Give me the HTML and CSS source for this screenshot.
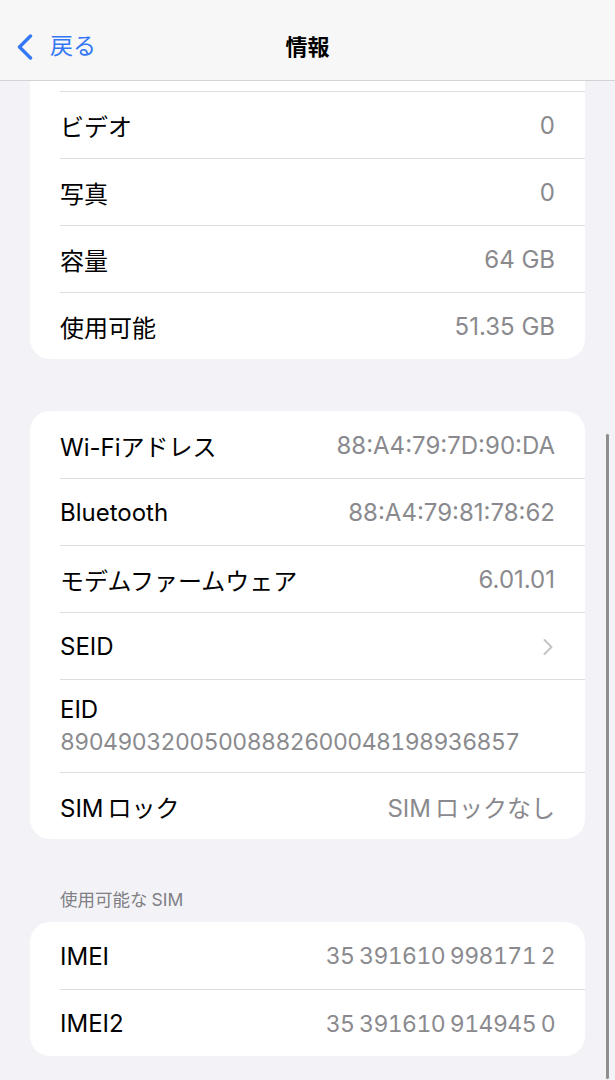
FILE: index.html
```html
<!DOCTYPE html>
<html lang="ja">
<head>
  <meta charset="utf-8">
  <title>情報</title>
  <link rel="stylesheet" href="styles.css">
</head>
<body>
  <header class="navbar">
    <a class="back" href="#">
      <svg class="back-icon" width="16" height="26" viewBox="0 0 16 26">
        <path d="M13.5 2 L2.5 13 L13.5 24" fill="none" stroke="#3478f6" stroke-width="3.4" stroke-linecap="round" stroke-linejoin="round"/>
      </svg>
      <span>戻る</span>
    </a>
    <h1 class="title">情報</h1>
  </header>

  <main class="content">
    <section class="card card-cut">
      <div class="stub"></div>
      <div class="row"><span class="label">ビデオ</span><span class="value">0</span></div>
      <div class="row"><span class="label">写真</span><span class="value">0</span></div>
      <div class="row"><span class="label">容量</span><span class="value">64 GB</span></div>
      <div class="row"><span class="label">使用可能</span><span class="value">51.35 GB</span></div>
    </section>

    <section class="card gap-top">
      <div class="row"><span class="label">Wi-Fiアドレス</span><span class="value">88:A4:79:7D:90:DA</span></div>
      <div class="row"><span class="label">Bluetooth</span><span class="value">88:A4:79:81:78:62</span></div>
      <div class="row"><span class="label">モデムファームウェア</span><span class="value">6.01.01</span></div>
      <div class="row">
        <span class="label">SEID</span>
        <svg class="chevron" width="12" height="20" viewBox="0 0 12 20">
          <path d="M2.5 3 L9.5 10 L2.5 17" fill="none" stroke="#c4c4c7" stroke-width="2" stroke-linecap="round" stroke-linejoin="round"/>
        </svg>
      </div>
      <div class="row row-stack">
        <span class="label">EID</span>
        <span class="value num">89049032005008882600048198936857</span>
      </div>
      <div class="row"><span class="label"><span class="latin">SIM</span>ロック</span><span class="value"><span class="latin">SIM</span>ロックなし</span></div>
    </section>

    <h2 class="section-title">使用可能な<span class="latin-small">SIM</span></h2>
    <section class="card">
      <div class="row"><span class="label">IMEI</span><span class="value num">35 391610 998171 2</span></div>
      <div class="row"><span class="label">IMEI2</span><span class="value num">35 391610 914945 0</span></div>
    </section>
  </main>

  <div class="scrollbar"></div>
</body>
</html>
```

FILE: styles.css
```css
body {
  margin: 0;
  padding: 0;
  width: 615px;
  height: 1080px;
  overflow: hidden;
  position: relative;
  background-color: #f2f2f7;
  font-family: Inter, "Noto Sans CJK JP", sans-serif;
  color: #000;
}

.navbar {
  box-sizing: border-box;
  height: 81px;
  background-color: #f7f7f7;
  border-bottom: 1px solid #d3d3d6;
  display: flex;
  align-items: center;
  justify-content: center;
  position: relative;
}

.back {
  position: absolute;
  left: 17px;
  top: 31px;
  display: flex;
  align-items: center;
  gap: 17px;
  color: #3478f6;
  text-decoration: none;
  font-size: 23px;
  line-height: 30px;
}

.back-icon {
  display: block;
  margin-top: 2px;
}

.title {
  margin: 0;
  margin-top: 10px;
  font-size: 22px;
  font-weight: 700;
}

.content {
  padding: 0 30px;
}

.card {
  background-color: #fff;
  border-radius: 20px;
  overflow: hidden;
}

.card-cut {
  border-top-left-radius: 0;
  border-top-right-radius: 0;
}

.stub {
  height: 10px;
}

.gap-top {
  margin-top: 52px;
}

.row {
  box-sizing: border-box;
  height: 67px;
  margin-left: 30px;
  padding-right: 30px;
  padding-top: 1px;
  border-top: 1px solid #dedee0;
  display: flex;
  align-items: center;
  justify-content: space-between;
  font-size: 24px;
}

.card > .row:first-child {
  border-top: none;
}

.label {
  white-space: nowrap;
}

.value {
  color: #8a8a8e;
  white-space: nowrap;
}

/* long numbers use fixed-width digits */
.num {
  font-size: 23px;
  font-variant-numeric: tabular-nums;
  letter-spacing: -0.55px;
  word-spacing: -1px;
}

.latin {
  margin-right: 4px;
}

.latin-small {
  margin-left: 4px;
}

.chevron {
  display: block;
  margin-right: 1px;
}

.row-stack {
  height: 93px;
  flex-direction: column;
  align-items: flex-start;
  justify-content: flex-start;
  padding-top: 13px;
}

.row-stack .label,
.row-stack .value {
  line-height: 33px;
}

.section-title {
  margin: 50px 0 11px 30px;
  font-size: 17.5px;
  line-height: 22px;
  font-weight: 400;
  color: #7f7f84;
}

.scrollbar {
  position: absolute;
  right: 5px;
  top: 433px;
  bottom: 0;
  width: 3px;
  background-color: #8e8e8e;
  border: 1px solid #f4f4f4;
  border-radius: 3px;
}
```
